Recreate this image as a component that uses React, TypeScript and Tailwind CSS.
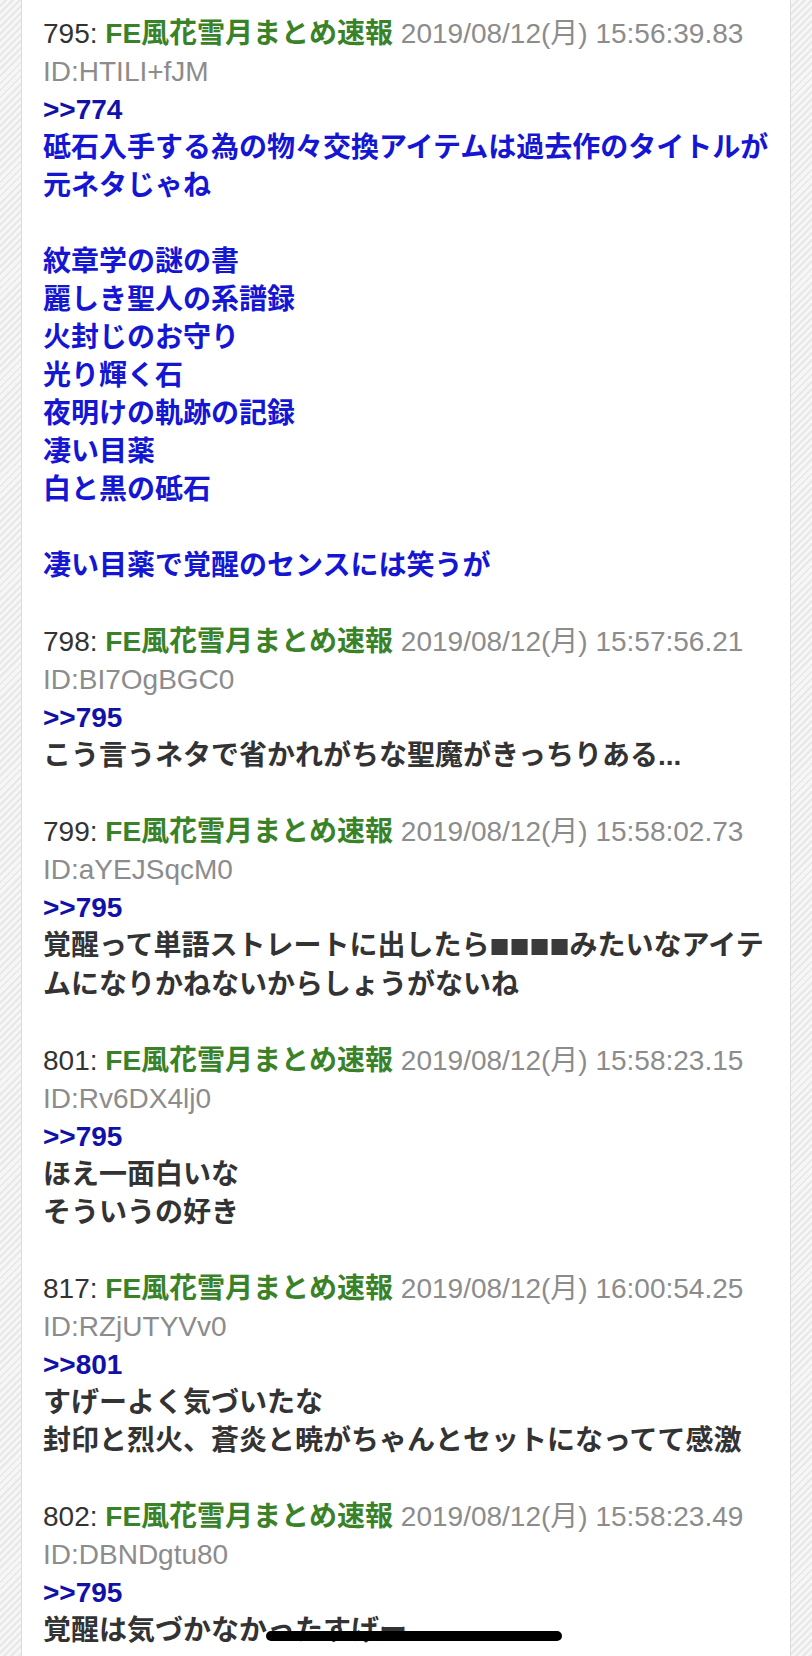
import React from 'react'

type Post = {
  no: number
  date: string
  id: string
  anchor: string
  lines: string[]
  blue?: boolean
}

const posts: Post[] = [
  {
    no: 795,
    date: '2019/08/12(月) 15:56:39.83',
    id: 'ID:HTILI+fJM',
    anchor: '>>774',
    blue: true,
    lines: [
      '砥石入手する為の物々交換アイテムは過去作のタイトルが元ネタじゃね',
      '',
      '紋章学の謎の書',
      '麗しき聖人の系譜録',
      '火封じのお守り',
      '光り輝く石',
      '夜明けの軌跡の記録',
      '凄い目薬',
      '白と黒の砥石',
      '',
      '凄い目薬で覚醒のセンスには笑うが',
    ],
  },
  {
    no: 798,
    date: '2019/08/12(月) 15:57:56.21',
    id: 'ID:BI7OgBGC0',
    anchor: '>>795',
    lines: ['こう言うネタで省かれがちな聖魔がきっちりある...'],
  },
  {
    no: 799,
    date: '2019/08/12(月) 15:58:02.73',
    id: 'ID:aYEJSqcM0',
    anchor: '>>795',
    lines: ['覚醒って単語ストレートに出したら■■■■みたいなアイテムになりかねないからしょうがないね'],
  },
  {
    no: 801,
    date: '2019/08/12(月) 15:58:23.15',
    id: 'ID:Rv6DX4lj0',
    anchor: '>>795',
    lines: ['ほえ一面白いな', 'そういうの好き'],
  },
  {
    no: 817,
    date: '2019/08/12(月) 16:00:54.25',
    id: 'ID:RZjUTYVv0',
    anchor: '>>801',
    lines: ['すげーよく気づいたな', '封印と烈火、蒼炎と暁がちゃんとセットになってて感激'],
  },
  {
    no: 802,
    date: '2019/08/12(月) 15:58:23.49',
    id: 'ID:DBNDgtu80',
    anchor: '>>795',
    lines: ['覚醒は気づかなかったすげー'],
  },
]

// the censored squares render narrower than the kana around them
function Body({ text }: { text: string }) {
  if (!text) return <div className="h-[38px]" />
  const parts = text.split(/(■+)/)
  return (
    <div>
      {parts.map((p, i) =>
        p.startsWith('■') ? (
          <span key={i} className="font-['Noto_Sans_CJK_JP'] text-[20px] text-[#3a3a3a]">{p}</span>
        ) : (
          <span key={i}>{p}</span>
        )
      )}
    </div>
  )
}

export default function App() {
  return (
    <div
      className="relative h-[1656px] overflow-hidden bg-[repeating-linear-gradient(135deg,#f6f6f6_0px,#f6f6f6_3px,#e8e8e8_3px,#e8e8e8_5px)] px-[21px]"
      style={{ fontFamily: '"Liberation Sans", "Noto Sans CJK JP", sans-serif' }}
    >
      <div className="h-full bg-white border-x border-[#dcdcdc] pl-[21px] pr-[12px] pt-[15px] text-[28px] leading-[38px]">
        {posts.map((p) => (
          <div key={p.no} className="mb-[38px]">
            <div className="whitespace-nowrap">
              <span className="text-[#333333]">{p.no}: </span>
              <span className="font-bold text-[#3a8228]">FE風花雪月まとめ速報</span>
              <span className="text-[#8c8c8c]"> {p.date}</span>
            </div>
            <div className="text-[#8c8c8c]">{p.id}</div>
            <div className="font-bold text-[#1111aa]">{p.anchor}</div>
            <div className={`font-bold ${p.blue ? 'text-[#1515d4]' : 'text-[#333333]'}`}>
              {p.lines.map((l, i) => (
                <Body key={i} text={l} />
              ))}
            </div>
          </div>
        ))}
      </div>
      <div className="absolute left-[266px] top-[1631px] h-[10px] w-[296px] rounded-full bg-black" />
    </div>
  )
}
